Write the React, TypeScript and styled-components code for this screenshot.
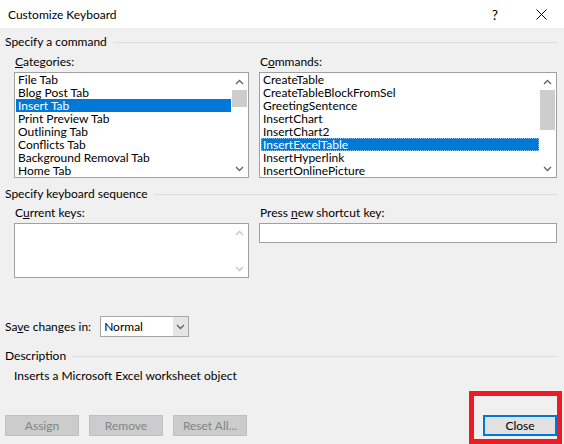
import React from 'react';
import styled, { createGlobalStyle } from 'styled-components';

const GlobalStyle = createGlobalStyle`
  html, body {
    margin: 0;
    padding: 0;
    background: #f0f0f0;
  }
  body {
    font-family: Lato, "Liberation Sans", sans-serif;
    font-size: 12px;
    color: #000;
  }
`;

const Window = styled.div`
  position: relative;
  width: 564px;
  height: 444px;
  overflow: hidden;
  display: flex;
  flex-direction: column;
  background: #f0f0f0;
`;

const TitleBar = styled.div`
  height: 28px;
  flex: none;
  display: flex;
  align-items: center;
  background: #fff;
  padding-left: 8px;
`;

const Title = styled.div`
  flex: 1;
`;

const TitleButton = styled.div`
  width: 46px;
  height: 28px;
  display: flex;
  align-items: center;
  justify-content: center;
  font-size: 14px;
`;

const Body = styled.div`
  flex: 1;
  display: flex;
  flex-direction: column;
  padding: 0 7px 0 5px;
`;

const GroupHeading = styled.div<{ $top: number }>`
  display: flex;
  align-items: center;
  gap: 6px;
  height: 16px;
  line-height: 16px;
  margin-top: ${(p) => p.$top}px;

  &::after {
    content: '';
    flex: 1;
    border-top: 1px solid #dcdcdc;
  }
`;

const Columns = styled.div<{ $top: number }>`
  display: grid;
  grid-template-columns: 235px 298px;
  column-gap: 10px;
  margin: ${(p) => p.$top}px 0 0 9px;
`;

const Field = styled.div`
  display: flex;
  flex-direction: column;
`;

const Label = styled.div`
  height: 16px;
  line-height: 16px;
  margin-bottom: 2px;
  padding-left: 1px;
`;

const ListBox = styled.div<{ $height: number }>`
  height: ${(p) => p.$height}px;
  box-sizing: border-box;
  border: 1px solid #a0a0a0;
  background: #fff;
  display: flex;
`;

const Items = styled.div`
  flex: 1;
  padding-left: 1px;
  overflow: hidden;
`;

const Item = styled.div<{ $selected?: boolean; $focus?: boolean }>`
  height: 13px;
  line-height: 13px;
  padding-left: 2px;
  white-space: nowrap;
  box-sizing: border-box;
  background: ${(p) => (p.$selected ? '#0078d7' : 'transparent')};
  color: ${(p) => (p.$selected ? '#fff' : '#000')};
  outline: ${(p) => (p.$focus ? '1px dotted #8cc2ee' : 'none')};
  outline-offset: -1px;
`;

const ScrollBar = styled.div`
  width: 17px;
  display: flex;
  flex-direction: column;
`;

const ScrollArrow = styled.div`
  height: 17px;
  flex: none;
  display: flex;
  align-items: center;
  justify-content: center;
`;

const Track = styled.div`
  flex: 1;
`;

const Thumb = styled.div<{ $offset: number; $size: number }>`
  margin: ${(p) => p.$offset}px 1px 0;
  height: ${(p) => p.$size}px;
  background: #cdcdcd;
`;

const TextInput = styled.div`
  height: 20px;
  box-sizing: border-box;
  border: 1px solid #a0a0a0;
  background: #fff;
`;

const SaveRow = styled.div`
  display: flex;
  align-items: center;
  gap: 9px;
  height: 21px;
  margin-top: 38px;
`;

const Combo = styled.div`
  width: 89px;
  height: 21px;
  box-sizing: border-box;
  border: 1px solid #a6a6a6;
  background: #fff;
  display: flex;
`;

const ComboText = styled.div`
  flex: 1;
  padding-left: 3px;
  line-height: 19px;
`;

const ComboButton = styled.div`
  width: 15px;
  background: #e5e5e5;
  display: flex;
  align-items: center;
  justify-content: center;
`;

const DescText = styled.div`
  height: 16px;
  line-height: 16px;
  margin-top: 4px;
  padding-left: 9px;
`;

const ButtonRow = styled.div`
  display: flex;
  gap: 10px;
  margin-top: 31px;
`;

const Button = styled.div<{ $disabled?: boolean; $default?: boolean }>`
  width: 74px;
  height: 21px;
  box-sizing: border-box;
  display: flex;
  align-items: center;
  justify-content: center;
  background: ${(p) => (p.$disabled ? '#cccccc' : '#e1e1e1')};
  border: ${(p) => (p.$default ? '2px solid #0078d7' : p.$disabled ? '1px solid #bfbfbf' : '1px solid #adadad')};
  color: ${(p) => (p.$disabled ? '#838383' : '#000')};
  margin-left: ${(p) => (p.$default ? 'auto' : '0')};
`;

const Highlight = styled.div`
  position: absolute;
  left: 469px;
  top: 391px;
  width: 93px;
  height: 53px;
  box-sizing: border-box;
  border: 5px solid #ed1c24;
`;

const Chevron = ({ up, color = '#606060' }: { up?: boolean; color?: string }) => (
  <svg width="9" height="6" viewBox="0 0 9 6">
    <polyline
      points={up ? '1,5 4.5,1.5 8,5' : '1,1 4.5,4.5 8,1'}
      fill="none"
      stroke={color}
      strokeWidth="1.3"
    />
  </svg>
);

const categories = [
  'File Tab',
  'Blog Post Tab',
  'Insert Tab',
  'Print Preview Tab',
  'Outlining Tab',
  'Conflicts Tab',
  'Background Removal Tab',
  'Home Tab',
];

const commands = [
  'CreateTable',
  'CreateTableBlockFromSel',
  'GreetingSentence',
  'InsertChart',
  'InsertChart2',
  'InsertExcelTable',
  'InsertHyperlink',
  'InsertOnlinePicture',
];

const Scroller = ({ thumb, disabled }: { thumb?: [number, number]; disabled?: boolean }) => {
  const color = disabled ? '#c5c5c5' : '#606060';
  return (
    <ScrollBar>
      <ScrollArrow>
        <Chevron up color={color} />
      </ScrollArrow>
      <Track>{thumb && <Thumb $offset={thumb[0]} $size={thumb[1]} />}</Track>
      <ScrollArrow>
        <Chevron color={color} />
      </ScrollArrow>
    </ScrollBar>
  );
};

export default function App() {
  return (
    <Window>
      <GlobalStyle />
      <TitleBar>
        <Title>Customize Keyboard</Title>
        <TitleButton>?</TitleButton>
        <TitleButton>
          <svg width="11" height="11" viewBox="0 0 11 11">
            <path d="M0.5 0.5 L10.5 10.5 M10.5 0.5 L0.5 10.5" stroke="#000" strokeWidth="1" />
          </svg>
        </TitleButton>
      </TitleBar>

      <Body>
        <GroupHeading $top={6}>Specify a command</GroupHeading>
        <Columns $top={4}>
          <Field>
            <Label>
              <u>C</u>ategories:
            </Label>
            <ListBox $height={106}>
              <Items>
                {categories.map((c) => (
                  <Item key={c} $selected={c === 'Insert Tab'}>
                    {c}
                  </Item>
                ))}
              </Items>
              <Scroller thumb={[0, 17]} />
            </ListBox>
          </Field>
          <Field>
            <Label>
              C<u>o</u>mmands:
            </Label>
            <ListBox $height={106}>
              <Items>
                {commands.map((c) => (
                  <Item key={c} $selected={c === 'InsertExcelTable'} $focus={c === 'InsertExcelTable'}>
                    {c}
                  </Item>
                ))}
              </Items>
              <Scroller thumb={[0, 40]} />
            </ListBox>
          </Field>
        </Columns>

        <GroupHeading $top={8}>Specify keyboard sequence</GroupHeading>
        <Columns $top={3}>
          <Field>
            <Label>
              C<u>u</u>rrent keys:
            </Label>
            <ListBox $height={55}>
              <Items />
              <Scroller disabled />
            </ListBox>
          </Field>
          <Field>
            <Label>
              Press <u>n</u>ew shortcut key:
            </Label>
            <TextInput />
          </Field>
        </Columns>

        <SaveRow>
          <span>
            Sa<u>v</u>e changes in:
          </span>
          <Combo>
            <ComboText>Normal</ComboText>
            <ComboButton>
              <Chevron />
            </ComboButton>
          </Combo>
        </SaveRow>

        <GroupHeading $top={11}>Description</GroupHeading>
        <DescText>Inserts a Microsoft Excel worksheet object</DescText>

        <ButtonRow>
          <Button $disabled>Assign</Button>
          <Button $disabled>Remove</Button>
          <Button $disabled>Reset All...</Button>
          <Button $default>Close</Button>
        </ButtonRow>
      </Body>
      <Highlight />
    </Window>
  );
}
